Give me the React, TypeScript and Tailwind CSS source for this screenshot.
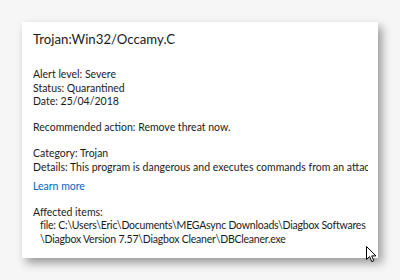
const body = "font-['Lato','Open_Sans',sans-serif]";

function Cursor() {
  return (
    <svg
      className="absolute left-[366px] top-[246px]"
      width="12"
      height="17"
      viewBox="0 0 12 17"
    >
      <path
        d="M0.5 0.5 L0.5 13.5 L3.6 10.6 L5.8 15.6 L7.8 14.7 L5.7 9.9 L10 9.9 Z"
        fill="#fff"
        stroke="#000"
        strokeWidth="1"
        strokeLinejoin="round"
      />
    </svg>
  );
}

export default function App() {
  return (
    <div className={`relative w-[400px] h-[280px] bg-[#f6f6f6] pt-[22px] pl-[22px] ${body}`}>
      <div className="w-[356px] h-[236px] bg-white shadow-[4px_5px_9px_rgba(0,0,0,0.38)] pt-[6px] pl-[11px] pr-[10px] text-[#1b1b1b] overflow-hidden">
        <div className="text-[13.2px] leading-[22px]">Trojan:Win32/Occamy.C</div>

        <div className="mt-[18px] text-[10.5px] leading-[13.5px]">
          <div>Alert level: Severe</div>
          <div>Status: Quarantined</div>
          <div>Date: 25/04/2018</div>
        </div>

        <div className="mt-[12px] text-[10.5px] leading-[13.5px]">
          Recommended action: Remove threat now.
        </div>

        <div className="mt-[13px] text-[10.5px] leading-[13.5px]">
          <div>Category: Trojan</div>
          <div className="whitespace-nowrap overflow-hidden">
            Details: This program is dangerous and executes commands from an attacker.
          </div>
        </div>

        <div className="mt-[6px] text-[10.5px] leading-[13.5px] text-[#0067c0]">Learn more</div>

        <div className="mt-[12px] text-[10.5px] leading-[13.5px]">
          <div>Affected items:</div>
          <div className="pl-[7px] whitespace-nowrap tracking-[-0.22px]">
            file: C:\Users\Eric\Documents\MEGAsync Downloads\Diagbox Softwares
          </div>
          <div className="pl-[7px] whitespace-nowrap tracking-[-0.22px]">
            \Diagbox Version 7.57\Diagbox Cleaner\DBCleaner.exe
          </div>
        </div>
      </div>
      <Cursor />
    </div>
  );
}
